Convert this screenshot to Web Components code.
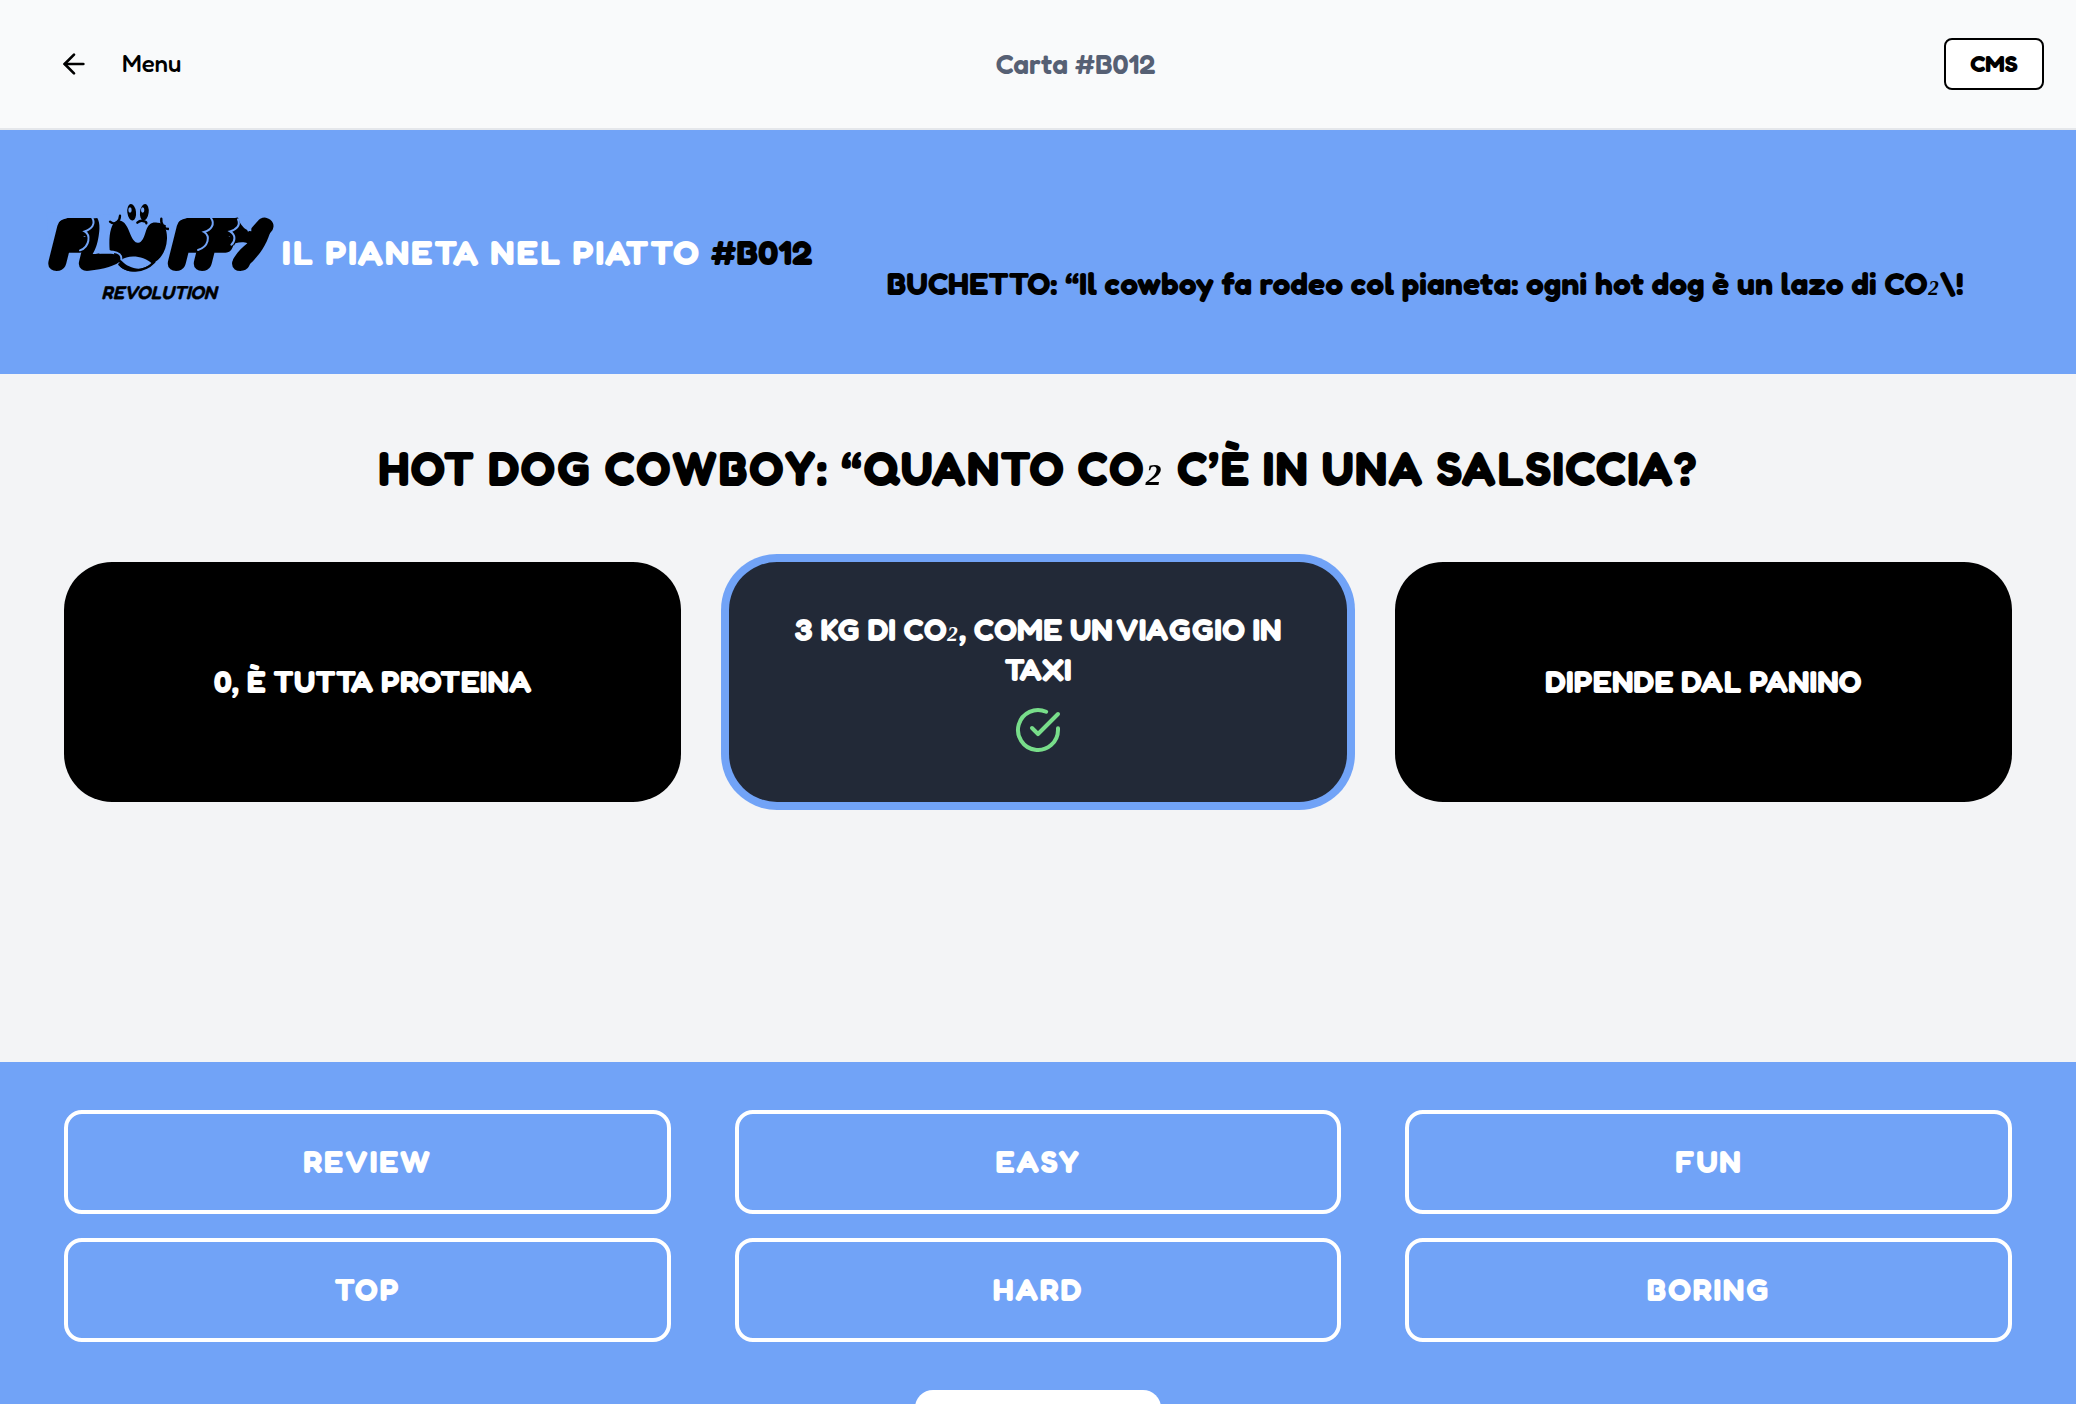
<!DOCTYPE html>
<html lang="it">
<head>
<meta charset="utf-8">
<meta name="viewport" content="width=device-width, initial-scale=1">
<title>Carta #B012</title>
<style>
  :root { --blue: #71a3f7; --ink: #000; }
  html, body { margin: 0; height: 100%; }
  body { overflow: hidden; background: #f3f4f6; font-family: Fredoka, Lato, "Open Sans", sans-serif; color: var(--ink); }
  .sub2 { font-family: "Liberation Serif", serif; font-size: 1.1em; font-style: italic; font-weight: 700; line-height: 0; vertical-align: 0.2em; }
</style>
</head>
<body>
<quiz-page>
  <top-bar slot="top" card="Carta #B012"></top-bar>
  <hero-banner slot="hero">
    <span slot="title">IL PIANETA NEL PIATTO</span>
    <span slot="code">#B012</span>
    <span slot="quote">BUCHETTO: “Il cowboy fa rodeo col pianeta: ogni hot dog è un lazo di CO<span class="sub2">₂</span>\!</span>
  </hero-banner>
  <span slot="question">HOT DOG COWBOY: “QUANTO CO<span class="sub2">₂</span> C’È IN UNA SALSICCIA?</span>
  <answer-card>0, È TUTTA PROTEINA</answer-card>
  <answer-card correct>3 KG DI CO<span class="sub2">₂</span>, COME UN VIAGGIO IN TAXI</answer-card>
  <answer-card>DIPENDE DAL PANINO</answer-card>
  <rating-panel slot="rating">
    <rate-button>REVIEW</rate-button>
    <rate-button>EASY</rate-button>
    <rate-button>FUN</rate-button>
    <rate-button>TOP</rate-button>
    <rate-button>HARD</rate-button>
    <rate-button>BORING</rate-button>
  </rating-panel>
</quiz-page>
<script>
const define = (name, html, setup) => {
  const tpl = document.createElement('template');
  tpl.innerHTML = html;
  customElements.define(name, class extends HTMLElement {
    constructor() {
      super();
      this.attachShadow({ mode: 'open' }).append(tpl.content.cloneNode(true));
    }
    connectedCallback() { if (setup) setup(this, this.shadowRoot); }
  });
};

define('quiz-page', `
<style>
  :host { display: flex; flex-direction: column; min-height: 100%; }
  main { box-sizing: border-box; min-height: 49vh; padding: 64px; }
  h1 { margin: 0 0 64px; font-size: 48px; line-height: 60px; font-weight: 700; letter-spacing: 0.025em; text-align: center; }
  .answers { display: grid; grid-template-columns: repeat(3, 1fr); gap: 48px; }
</style>
<slot name="top"></slot>
<slot name="hero"></slot>
<main>
  <h1><slot name="question"></slot></h1>
  <div class="answers"><slot></slot></div>
</main>
<slot name="rating"></slot>`);

define('top-bar', `
<style>
  :host { display: block; background: #f9fafb; border-bottom: 2px solid #e5e7eb; }
  header { display: flex; align-items: center; justify-content: space-between; height: 128px; padding: 0 32px; }
  button { font: inherit; color: inherit; background: none; border: 0; cursor: pointer; }
  .back { display: flex; align-items: center; gap: 32px; padding: 16px 26px; font-size: 24px; line-height: 32px; font-weight: 500; }
  .back svg { width: 32px; height: 32px; }
  .card { font-size: 28px; line-height: 36px; font-weight: 600; color: #566074; }
  .cms { box-sizing: border-box; width: 100px; height: 52px; padding: 0; background: #fff; border: 2px solid #000; border-radius: 8px; font-size: 24px; line-height: 32px; font-weight: 700; }
</style>
<header>
  <button class="back" type="button">
    <svg viewBox="0 0 24 24" fill="none" stroke="currentColor" stroke-width="2" stroke-linecap="round" stroke-linejoin="round" aria-hidden="true"><path d="m12 19-7-7 7-7"/><path d="M19 12H5"/></svg>
    Menu
  </button>
  <span class="card"></span>
  <button class="cms" type="button">CMS</button>
</header>`, (el, root) => { root.querySelector('.card').textContent = el.getAttribute('card'); });

define('brand-logo', `
<style>
  :host { display: block; flex: none; width: 224px; }
  svg { display: block; width: 100%; height: auto; overflow: visible; }
  text { font-family: Fredoka, Lato, sans-serif; font-style: italic; fill: #000; stroke: #000; stroke-linejoin: round; }
  .big { font-size: 181px; font-weight: 500; stroke-width: 32px; }
  .small { font-size: 56px; font-weight: 600; stroke-width: 1px; }
  .gap { fill: none; stroke: var(--blue); stroke-width: 6px; stroke-linecap: round; }
  .line { fill: none; stroke: #000; stroke-width: 7px; stroke-linecap: round; }
  .cut { fill: var(--blue); }
</style>
<svg viewBox="54 72 672 288" role="img" aria-label="Fluffy Revolution">
  <text class="big" y="256" x="58 150 246 416 494 574">FLUFFY</text>
  <path class="cut" d="M232 104H420V140C404 133 392 131 380 134C352 142 350 188 325 188C304 192 292 150 282 132C274 118 258 116 244 132L232 134Z"/>
  <path class="cut" d="M196 106C212 122 209 150 206 168C202 194 196 208 188 222C212 222 228 215 240 213V104Z"/>
  <path class="cut" d="M160 274C206 270 246 262 268 246L272 282H160Z"/>
  <path d="M262 122C284 119 293 142 301 163C309 182 317 190 325 188C336 187 342 172 348 152C355 132 366 125 382 128C403 127 412 150 411 176C409 216 389 242 366 250C345 231 300 222 276 238C274 218 242 216 239 210C236 175 240 127 262 122Z"/>
  <path class="cut" d="M273 241C295 222 342 228 365 250C338 276 297 268 273 241Z"/>
  <path class="line" d="M268 253C292 278 340 280 373 246"/>
  <path class="line" d="M240 125Q250 134 260 127Q270 120 270 107"/>
  <path class="line" d="M394 116Q392 130 400 139Q406 147 416 147"/>
  <path class="line" d="M322 128Q332 119 343 124Q350 126 349 130"/>
  <ellipse cx="305" cy="97" rx="13" ry="25" transform="rotate(-7 305 97)"/>
  <ellipse cx="343" cy="97" rx="13" ry="25" transform="rotate(7 343 97)"/>
  <ellipse cx="300" cy="90" rx="5" ry="8" fill="var(--blue)"/>
  <ellipse cx="338" cy="90" rx="5" ry="8" fill="var(--blue)"/>
  <path class="cut" d="M56 190C66 140 80 116 130 112V98H50ZM414 190C424 140 438 116 488 112V98H418V130Z"/>
  <path d="M724 138C718 190 676 244 640 268L622 250L680 160Z"/>
  <path class="cut" d="M622 106H664V154C648 152 636 140 629 126Z"/>
  <path class="cut" d="M606 208L616 190C630 186 644 186 652 190C630 208 612 228 604 250L592 250Z"/>
  <path class="gap" d="M187 114C197 132 186 146 164 154C182 164 180 200 150 211"/>
  <path class="gap" d="M212 216C256 212 276 218 274 238"/>
  <path class="gap" d="M543 114C556 132 544 150 522 156C542 168 536 200 504 210"/>
  <path class="gap" d="M624 118C632 136 620 148 600 154C618 164 616 184 604 194"/>
  <text class="small" x="214" y="356">REVOLUTION</text>
</svg>`);

define('hero-banner', `
<style>
  :host { display: flex; align-items: center; gap: 10px; box-sizing: border-box; min-height: 244px; padding: 32px 48px; background: var(--blue); }
  h2 { margin: 0; font-size: 36px; line-height: 44px; font-weight: 700; white-space: nowrap; }
  .title { color: #fff; letter-spacing: 0.05em; }
  p { flex: 1; margin: 0; padding-top: 64px; text-align: center; font-size: 32px; line-height: 40px; font-weight: 700; }
</style>
<brand-logo></brand-logo>
<h2><span class="title"><slot name="title"></slot> </span><slot name="code"></slot></h2>
<p><slot name="quote"></slot></p>`);

define('answer-card', `
<style>
  :host { display: flex; }
  button { flex: 1; display: flex; flex-direction: column; align-items: center; justify-content: center; gap: 16px; box-sizing: border-box; min-height: 240px; padding: 32px 48px; border: 0; border-radius: 48px; background: #000; color: #fff; font: inherit; font-size: 32px; line-height: 40px; font-weight: 700; text-align: center; cursor: pointer; }
  svg { display: none; width: 48px; height: 48px; color: #78dd8a; }
  :host([correct]) button { background: #222937; box-shadow: 0 0 0 8px var(--blue); }
  :host([correct]) svg { display: block; }
</style>
<button type="button">
  <span><slot></slot></span>
  <svg viewBox="0 0 24 24" fill="none" stroke="currentColor" stroke-width="2" stroke-linecap="round" stroke-linejoin="round" aria-hidden="true"><path d="M22 11.08V12a10 10 0 1 1-5.93-9.14"/><path d="m22 4-10 10.01-3-3"/></svg>
</button>`);

define('rate-button', `
<style>
  :host { display: flex; }
  button { flex: 1; box-sizing: border-box; min-height: 104px; padding: 28px; border: 4px solid #fff; border-radius: 18px; background: none; color: #fff; font: inherit; font-size: 32px; line-height: 40px; font-weight: 700; letter-spacing: 0.05em; cursor: pointer; }
</style>
<button type="button"><slot></slot></button>`);

define('rating-panel', `
<style>
  :host { display: flex; flex-direction: column; align-items: center; gap: 48px; padding: 48px 64px; background: var(--blue); }
  .grid { align-self: stretch; display: grid; grid-template-columns: repeat(3, 1fr); gap: 24px 64px; }
  .next { width: 246px; height: 96px; border: 0; border-radius: 18px; background: #fff; cursor: pointer; }
</style>
<div class="grid"><slot></slot></div>
<button class="next" type="button" aria-label="Avanti"></button>`);
</script>
</body>
</html>
